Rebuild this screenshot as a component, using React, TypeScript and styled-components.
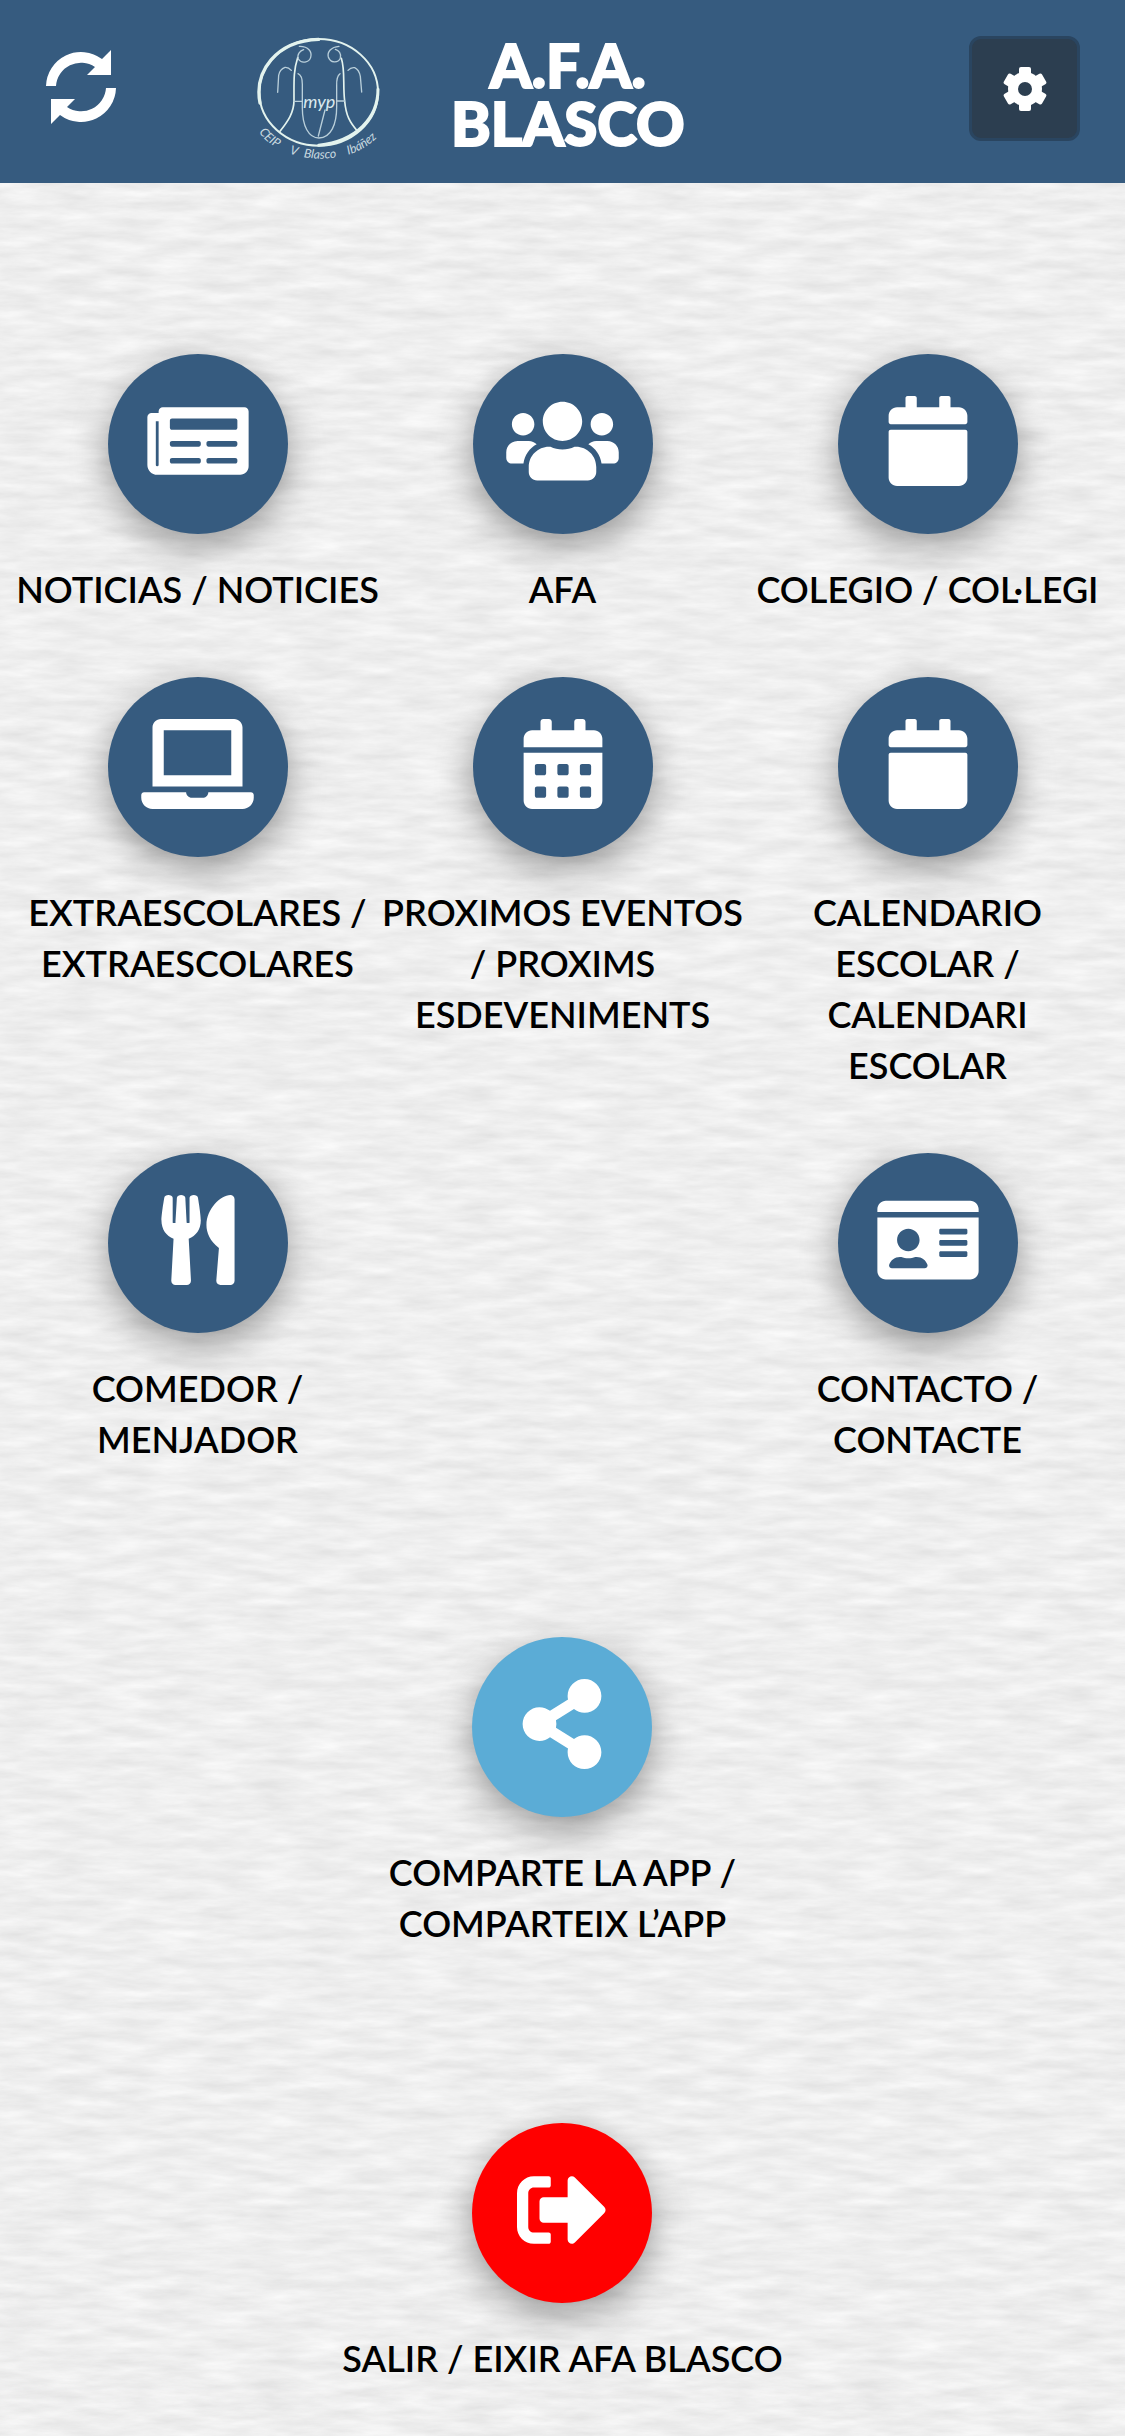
import React from 'react';
import styled, { createGlobalStyle } from 'styled-components';
import type { IconType } from 'react-icons';
import {
  FaCalendar,
  FaCalendarAlt,
  FaIdCard,
  FaLaptop,
  FaNewspaper,
  FaShareAlt,
  FaSignOutAlt,
  FaUsers,
  FaUtensils,
} from 'react-icons/fa';

const colors = {
  primary: '#365b7f',
  dark: '#2c3e50',
  share: '#5bacd6',
  exit: '#ff0000',
  paper: '#efefef',
  ink: '#000000',
};

// Horizontal-grain paper, generated as a seamless vector noise tile.
const paper = encodeURIComponent(
  `<svg xmlns="http://www.w3.org/2000/svg" width="600" height="600">
    <filter id="p" x="0" y="0" width="100%" height="100%" color-interpolation-filters="sRGB">
      <feTurbulence type="fractalNoise" baseFrequency="0.02 0.1" numOctaves="5" seed="7" stitchTiles="stitch"/>
      <feColorMatrix values="0.11 0 0 0 0.88  0.11 0 0 0 0.88  0.11 0 0 0 0.88  0 0 0 0 1"/>
    </filter>
    <rect width="600" height="600" filter="url(#p)"/>
  </svg>`
);

const GlobalStyle = createGlobalStyle`
  *, *::before, *::after { box-sizing: border-box; }
  body {
    margin: 0;
    background: ${colors.paper} url("data:image/svg+xml,${paper}");
    color: ${colors.ink};
    font-family: Lato, "Open Sans", sans-serif;
    text-rendering: optimizeLegibility;
  }
`;

const Header = styled.header`
  display: flex;
  align-items: center;
  height: 183px;
  padding: 0 45px;
  background: ${colors.primary};
`;

const RefreshButton = styled.button`
  display: flex;
  padding: 0;
  margin-bottom: 10px;
  border: 0;
  background: none;
  cursor: pointer;
`;

const Brand = styled.div`
  display: flex;
  align-items: center;
  flex: 1;
  gap: 66px;
  padding-left: 138px;
`;

const Emblem = styled.svg`
  flex: none;
  width: 130px;
  height: 125px;
  margin-top: 14px;
`;

const Title = styled.h1`
  margin: 4px 0 0;
  color: #fff;
  font-size: 60px;
  font-weight: 900;
  line-height: 58px;
  text-align: center;
  -webkit-text-stroke: 2px #fff;
`;

const SettingsButton = styled.button`
  display: flex;
  align-items: center;
  justify-content: center;
  width: 111px;
  height: 105px;
  margin-bottom: 6px;
  padding: 0;
  border: 3px solid #2a4560;
  border-radius: 12px;
  background: ${colors.dark};
  cursor: pointer;
`;

const Main = styled.main`
  padding: 171px 15px 48px;
`;

const Menu = styled.nav`
  display: grid;
  grid-template-columns: repeat(3, minmax(0, 1fr));
  row-gap: 62px;
`;

const Actions = styled.section`
  display: flex;
  flex-direction: column;
  align-items: center;
  gap: 174px;
  padding-top: 172px;
`;

const Tile = styled.a<{ $column?: number; $narrow?: boolean }>`
  display: flex;
  flex-direction: column;
  align-items: center;
  gap: 30px;
  grid-column: ${(p) => p.$column ?? 'auto'};
  max-width: ${(p) => (p.$narrow ? '33.33%' : 'none')};
  padding: 0;
  border: 0;
  background: none;
  color: inherit;
  font-family: inherit;
  font-size: 36px;
  font-weight: 600;
  line-height: 51px;
  text-align: center;
  text-decoration: none;
  text-rendering: inherit;
  cursor: pointer;
`;

const Disc = styled.span<{ $color: string; $iconWidth?: number }>`
  display: flex;
  align-items: center;
  justify-content: center;
  width: 180px;
  height: 180px;
  padding-bottom: 6px;
  border-radius: 50%;
  background: ${(p) => p.$color};
  box-shadow: 0 12px 36px rgba(0, 0, 0, 0.38);
  color: #fff;

  svg {
    width: ${(p) => p.$iconWidth ?? 90}px;
    height: 90px;
  }
`;

type Entry = { id: string; label: string; icon: IconType; iconWidth?: number; column?: number };

const entries: Entry[] = [
  { id: 'noticias', label: 'NOTICIAS / NOTICIES', icon: FaNewspaper, iconWidth: 102 },
  { id: 'afa', label: 'AFA', icon: FaUsers, iconWidth: 113 },
  { id: 'colegio', label: 'COLEGIO / COL·LEGI', icon: FaCalendar },
  { id: 'extraescolares', label: 'EXTRAESCOLARES / EXTRAESCOLARES', icon: FaLaptop, iconWidth: 113 },
  { id: 'eventos', label: 'PROXIMOS EVENTOS / PROXIMS ESDEVENIMENTS', icon: FaCalendarAlt },
  { id: 'calendario', label: 'CALENDARIO ESCOLAR / CALENDARI ESCOLAR', icon: FaCalendar },
  { id: 'comedor', label: 'COMEDOR / MENJADOR', icon: FaUtensils },
  { id: 'contacto', label: 'CONTACTO / CONTACTE', icon: FaIdCard, iconWidth: 102, column: 3 },
];

function RefreshIcon() {
  return (
    <svg width="72" height="74" viewBox="0 0 72 74" aria-hidden="true">
      <g id="loop-arrow" fill="#fff">
        <path d="M1 36A35 35 0 0 1 57 9L66 0V25H42L50 17A25 25 0 0 0 11 36Z" />
      </g>
      <use href="#loop-arrow" transform="rotate(180 36 37)" />
    </svg>
  );
}

function GearIcon() {
  return (
    <svg width="44" height="44" viewBox="-22 -22 44 44" aria-hidden="true">
      <g fill="#fff">
        {[0, 60, 120].map((angle) => (
          <rect key={angle} x="-6" y="-22" width="12" height="44" rx="2" transform={`rotate(${angle})`} />
        ))}
        <circle r="17" />
      </g>
      <circle r="7" fill={colors.dark} />
    </svg>
  );
}

function SchoolEmblem() {
  return (
    <Emblem viewBox="45 45 390 375" role="img" aria-label="Ampa CEIP V Blasco Ibáñez">
      <g fill="none" stroke="#e3f3ee" strokeLinecap="round" strokeLinejoin="round">
        <ellipse cx="236" cy="214" rx="178" ry="160" strokeWidth="6" />
        <path d="M60 246C42 150 108 60 236 55" strokeWidth="10" />
        <path d="M414 205C414 290 350 360 236 373" strokeWidth="9" />
        <g strokeWidth="5">
          <path d="M173 110C160 150 162 180 162 238C162 275 144 300 120 331" />
          <path d="M304 112C316 150 308 190 314 240C318 285 330 304 352 330" />
        </g>
        <g strokeWidth="4" stroke="#b9cfda">
          <path d="M178 76C205 75 217 93 212 109C207 125 184 129 175 114C170 99 181 89 191 86" />
          <path d="M297 76C273 78 261 93 265 108C271 127 294 127 301 112C305 98 296 88 286 85" />
          <path d="M113 214L116 163Q119 145 135 139Q145 138 154 148" />
          <path d="M365 213L361 166Q357 146 344 140Q333 138 324 148" />
          <path d="M174 158Q187 163 187 190V260C187 315 206 351 237 351C273 350 290 310 290 258V194Q289 166 300 158" />
          <path d="M162 241H187M290 240H314M255 267L235 345" />
        </g>
      </g>
      <text
        x="238"
        y="262"
        fill="#dbe9ee"
        fontFamily="Lato, sans-serif"
        fontSize="54"
        fontStyle="italic"
        fontWeight="400"
        textAnchor="middle"
      >
        myp
      </text>
      <path id="emblem-arc" d="M52 325C110 430 350 455 432 322" fill="none" />
      <g fill="#c9dae0" fontFamily="Lato, sans-serif" fontSize="37" fontStyle="italic">
        <text>
          <textPath href="#emblem-arc" startOffset="2%">CEIP</textPath>
        </text>
        <text>
          <textPath href="#emblem-arc" startOffset="28%">V</textPath>
        </text>
        <text>
          <textPath href="#emblem-arc" startOffset="38%">Blasco</textPath>
        </text>
        <text>
          <textPath href="#emblem-arc" startOffset="69%">Ibáñez</textPath>
        </text>
      </g>
    </Emblem>
  );
}

export default function App() {
  return (
    <>
      <GlobalStyle />
      <Header>
        <RefreshButton type="button" aria-label="Actualizar">
          <RefreshIcon />
        </RefreshButton>
        <Brand>
          <SchoolEmblem />
          <Title>
            A.F.A.
            <br />
            BLASCO
          </Title>
        </Brand>
        <SettingsButton type="button" aria-label="Ajustes">
          <GearIcon />
        </SettingsButton>
      </Header>
      <Main>
        <Menu>
          {entries.map(({ id, label, icon: Icon, iconWidth, column }) => (
            <Tile key={id} href={`#${id}`} $column={column}>
              <Disc $color={colors.primary} $iconWidth={iconWidth}>
                <Icon aria-hidden="true" />
              </Disc>
              <span>{label}</span>
            </Tile>
          ))}
        </Menu>
        <Actions>
          <Tile as="button" type="button" $narrow>
            <Disc $color={colors.share}>
              <FaShareAlt aria-hidden="true" />
            </Disc>
            <span>COMPARTE LA APP / COMPARTEIX L’APP</span>
          </Tile>
          <Tile as="button" type="button">
            <Disc $color={colors.exit}>
              <FaSignOutAlt aria-hidden="true" />
            </Disc>
            <span>SALIR / EIXIR AFA BLASCO</span>
          </Tile>
        </Actions>
      </Main>
    </>
  );
}
